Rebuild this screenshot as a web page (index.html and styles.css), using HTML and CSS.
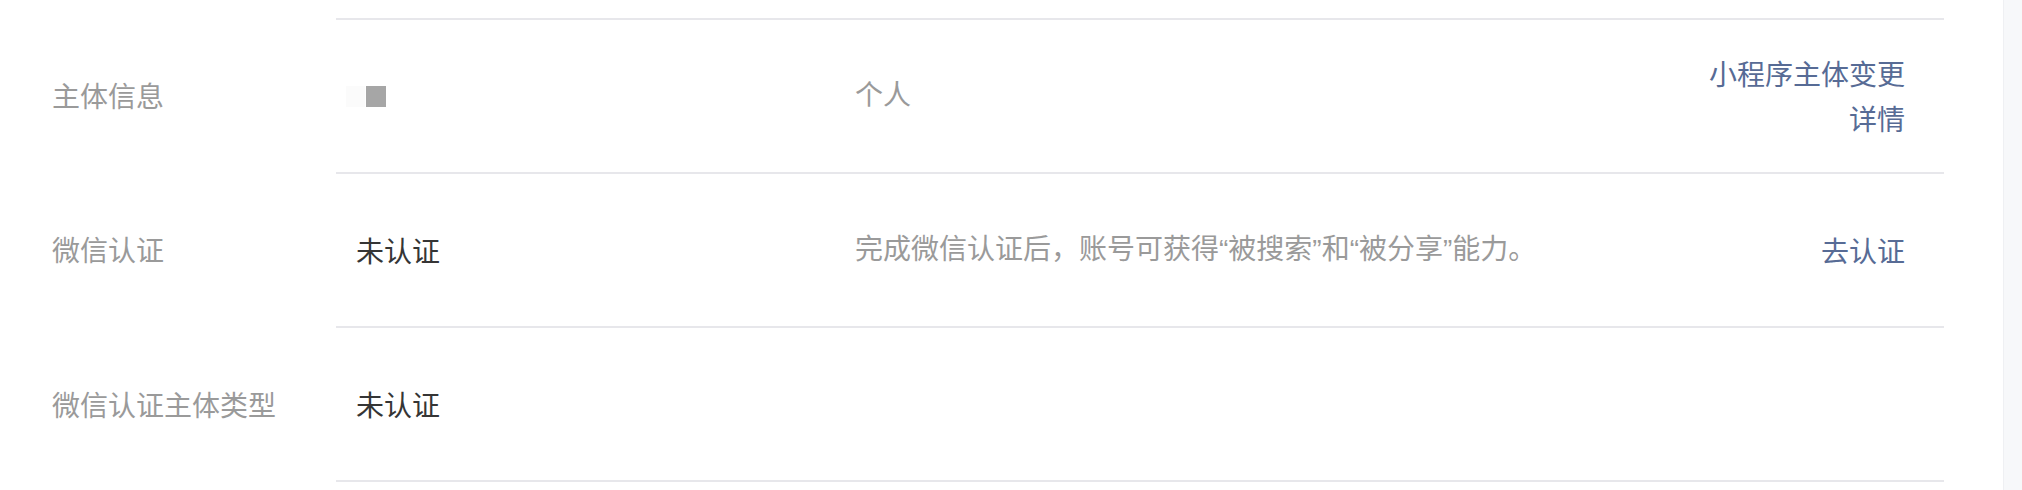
FILE: index.html
```html
<!DOCTYPE html>
<html lang="zh-CN">
<head>
  <meta charset="UTF-8" />
  <meta name="viewport" content="width=device-width, initial-scale=1.0"/>
  <title>基本设置</title>
  <link rel="stylesheet" href="styles.css">
</head>
<body>
  <div class="page">
    <div class="info-list">
      <div class="info-row">
        <div class="info-label">主体信息</div>
        <div class="info-body">
          <div class="info-value">
            <span class="mask mask-light"></span><span class="mask mask-dark"></span>
          </div>
          <div class="info-desc">个人</div>
          <div class="info-action"><a href="#">小程序主体变更详情</a></div>
        </div>
      </div>

      <div class="info-row">
        <div class="info-label">微信认证</div>
        <div class="info-body">
          <div class="info-value">未认证</div>
          <div class="info-desc">完成微信认证后，账号可获得“被搜索”和“被分享”能力。</div>
          <div class="info-action"><a href="#">去认证</a></div>
        </div>
      </div>

      <div class="info-row">
        <div class="info-label">微信认证主体类型</div>
        <div class="info-body">
          <div class="info-value">未认证</div>
          <div class="info-desc"></div>
          <div class="info-action"></div>
        </div>
      </div>
    </div>
  </div>
</body>
</html>
```

FILE: styles.css
```css
html, body {
  margin: 0;
  padding: 0;
}
body {
  font-family: "Noto Sans CJK SC", "Noto Sans", sans-serif;
  font-size: 28px;
  line-height: 1.6;
  background-color: #f7f8fa;
  height: 490px;
  overflow: hidden;
}
.page {
  width: 2004px;
  height: 490px;
  background: #fff;
  border-right: 1px solid #eff0f3;
  box-sizing: border-box;
  padding: 18px 0 0 52px;
}
.info-list {
  width: 1892px;
}
.info-row {
  display: flex;
}
.info-label {
  width: 284px;
  flex-shrink: 0;
  display: flex;
  align-items: center;
  color: #9a9a9a;
}
.info-body {
  flex: 1;
  display: flex;
  align-items: center;
  height: 152px;
  border-top: 2px solid #e7e7eb;
  padding: 0 39px 0 20px;
}
.info-row:last-child .info-body {
  border-bottom: 2px solid #e7e7eb;
}
.info-value {
  width: 499px;
  flex-shrink: 0;
  color: #353535;
  display: flex;
  align-items: center;
}
.info-desc {
  flex: 1;
  color: #9a9a9a;
  /* narrow latin quotes, CJK falls back */
  font-family: "Liberation Sans", "Noto Sans CJK SC", sans-serif;
}
.info-action {
  width: 200px;
  text-align: right;
}
.info-action a {
  color: #576b95;
  text-decoration: none;
}
.mask {
  display: inline-block;
  width: 19px;
  height: 21px;
}
.mask-light {
  background: #fbfbfb;
  margin-left: -10px;
}
.mask-dark {
  background: #a6a6a6;
  width: 20px;
  margin-left: 1px;
}
```
